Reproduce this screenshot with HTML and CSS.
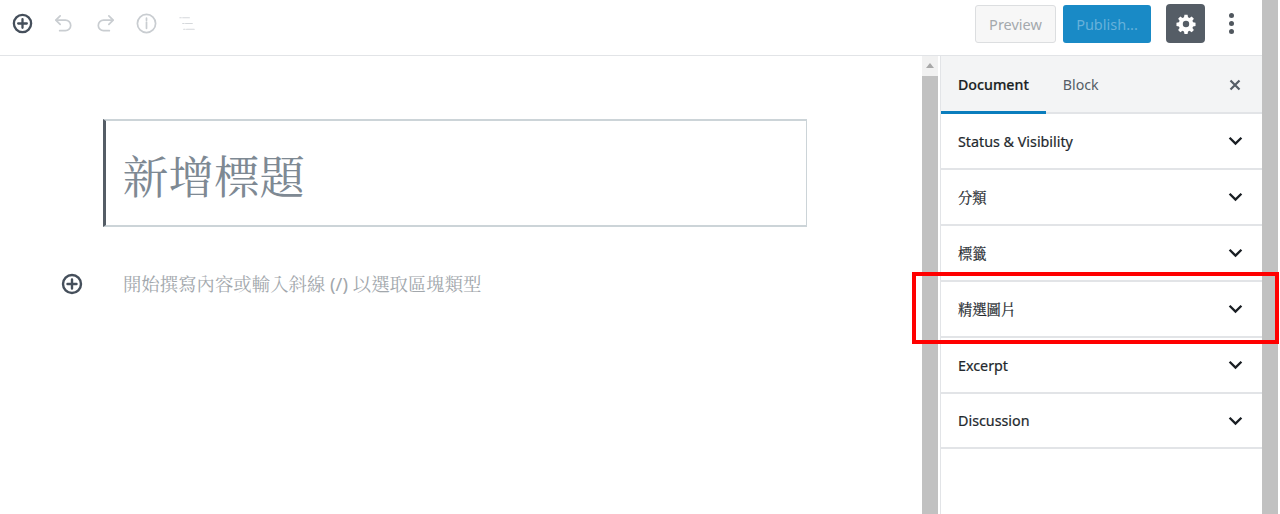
FILE: index.html
```html
<!DOCTYPE html>
<html lang="zh-Hant">
<head>
    <meta charset="UTF-8">
    <title>新增文章</title>
    <link rel="stylesheet" href="styles.css">
</head>
<body>
    <div class="app">
        <div class="top-bar">
            <div class="tools">
                <svg class="tool-icon dark" viewBox="0 0 24 24"><circle cx="12" cy="12" r="9" class="ring"/><path d="M12 7.5v9M7.5 12h9" class="line"/></svg>
                <svg class="tool-icon" viewBox="0 0 24 24"><path d="M8.5 4 4 8.5 8.5 13" class="line thin"/><path d="M4.5 8.5H14a5.5 5.5 0 0 1 0 11H8" class="line thin"/></svg>
                <svg class="tool-icon" viewBox="0 0 24 24"><path d="M15.5 4 20 8.500 15.500 13" class="line thin"/><path d="M19.500 8.500H10a5.500 5.500 0 0 0 0 11h6" class="line thin"/></svg>
                <svg class="tool-icon" viewBox="0 0 24 24"><circle cx="12" cy="12" r="9.500" class="ring thin"/><path d="M12 10.500v6.500M12 6.500v2" class="line thin"/></svg>
                <svg class="tool-icon" viewBox="0 0 24 24"><path d="M4 6h1.500M7 6h7M7 12h1.500M10 12h7M8 18h1.500M11 18h8" class="line hair"/></svg>
            </div>
            <div class="actions">
                <button class="btn-preview">Preview</button>
                <button class="btn-publish">Publish...</button>
                <div class="btn-settings">
                    <svg viewBox="0 0 24 24" width="22" height="22"><path d="M10.300 2h3.400l.5 2.700 1.700.7 2.300-1.600 2.400 2.400-1.600 2.300.7 1.700 2.700.5v3.400l-2.700.5-.7 1.700 1.600 2.300-2.400 2.400-2.300-1.600-1.700.7-.5 2.700h-3.400l-.5-2.700-1.700-.7-2.300 1.600-2.400-2.400 1.600-2.300-.7-1.700-2.700-.5v-3.400l2.700-.5.7-1.700-1.600-2.300 2.400-2.400 2.300 1.600 1.700-.7zM12 8.500a3.500 3.500 0 1 0 0 7 3.500 3.500 0 0 0 0-7z" fill="#fff" fill-rule="evenodd"/></svg>
                </div>
                <div class="more-dots"><span></span><span></span><span></span></div>
            </div>
            <div class="top-gutter"></div>
        </div>
        <div class="main">
            <div class="editor">
                <div class="title-box">新增標題</div>
                <div class="para-row">
                    <svg class="para-add" viewBox="0 0 24 24"><circle cx="12" cy="12" r="9" class="ring"/><path d="M12 7.500v9M7.500 12h9" class="line"/></svg>
                    <div class="placeholder">開始撰寫內容或輸入斜線 (/) 以選取區塊類型</div>
                </div>
            </div>
            <div class="scrollbar editor-scroll"><div class="scroll-up"></div><div class="scroll-thumb"></div></div>
            <div class="sidebar">
                <div class="tabs">
                    <div class="tab active">Document</div>
                    <div class="tab">Block</div>
                    <svg class="close-icon" viewBox="0 0 12 12"><path d="M1.500 1.500l9 9M10.500 1.500l-9 9"/></svg>
                </div>
                <div class="panel"><span>Status &amp; Visibility</span><svg class="chevron" viewBox="0 0 14 9"><path d="M1.500 1.500 7 7l5.500-5.500"/></svg></div>
                <div class="panel"><span>分類</span><svg class="chevron" viewBox="0 0 14 9"><path d="M1.500 1.500 7 7l5.500-5.500"/></svg></div>
                <div class="panel"><span>標籤</span><svg class="chevron" viewBox="0 0 14 9"><path d="M1.500 1.500 7 7l5.500-5.500"/></svg></div>
                <div class="panel"><span>精選圖片</span><svg class="chevron" viewBox="0 0 14 9"><path d="M1.500 1.500 7 7l5.500-5.500"/></svg></div>
                <div class="panel"><span>Excerpt</span><svg class="chevron" viewBox="0 0 14 9"><path d="M1.500 1.500 7 7l5.500-5.500"/></svg></div>
                <div class="panel"><span>Discussion</span><svg class="chevron" viewBox="0 0 14 9"><path d="M1.500 1.500 7 7l5.500-5.500"/></svg></div>
            </div>
            <div class="scrollbar page-scroll"></div>
        </div>
        <div class="highlight"></div>
    </div>
</body>
</html>
```

FILE: styles.css
```css
body {
    margin: 0;
    background: #fff;
    font-family: "Noto Sans", "Noto Serif CJK TC", "Noto Sans CJK TC", sans-serif;
    overflow: hidden;
}
.app {
    position: relative;
    width: 1280px;
    height: 514px;
    display: flex;
    flex-direction: column;
    overflow: hidden;
}

/* top bar */
.top-bar {
    display: flex;
    align-items: center;
    height: 55px;
    border-bottom: 1px solid #e2e4e7;
    box-sizing: content-box;
    flex-shrink: 0;
}
.tools {
    display: flex;
    align-items: center;
    gap: 18.300px;
    padding-left: 11px;
    flex: 1;
    margin-top: -8px;
}
.tool-icon {
    width: 23px;
    height: 23px;
}
.ring, .line {
    fill: none;
    stroke: #c9cdd1;
    stroke-width: 2;
    stroke-linecap: round;
    stroke-linejoin: round;
}
.thin { stroke-width: 1.8; }
.hair { stroke-width: 1.200; stroke: #d5d8db; }
.dark .ring, .dark .line, .para-add .ring, .para-add .line {
    stroke: #454f5b;
    stroke-width: 2.400;
}
.actions {
    display: flex;
    align-items: center;
    margin-top: -8px;
}
.actions button {
    height: 38px;
    box-sizing: border-box;
    border-radius: 3px;
    font-family: inherit;
    font-size: 14.500px;
    padding: 0;
}
.btn-preview {
    width: 81px;
    background: #f7f7f7;
    border: 1px solid #dcdee0;
    color: #a4a9ad;
}
.btn-publish {
    width: 88px;
    margin-left: 7px;
    background: #198ac6;
    border: none;
    color: #66b1da;
}
.btn-settings {
    width: 39px;
    height: 39px;
    margin-left: 15px;
    border-radius: 4px;
    background: #555d66;
    display: flex;
    align-items: center;
    justify-content: center;
}
.more-dots {
    width: 14px;
    margin-left: 19px;
    margin-right: 24px;
    display: flex;
    flex-direction: column;
    align-items: center;
    gap: 3px;
}
.more-dots span {
    width: 5px;
    height: 5px;
    border-radius: 50%;
    background: #50575e;
}
.top-gutter {
    width: 18px;
    height: 56px;
    background: #c1c1c1;
    margin-bottom: -1px;
    border-right: 2px solid #fff;
    box-sizing: border-box;
}

/* main */
.main {
    flex: 1;
    display: flex;
    min-height: 0;
}
.editor {
    width: 922px;
    flex-shrink: 0;
    padding-top: 63px;
    box-sizing: border-box;
}
.title-box {
    margin-left: 103px;
    width: 704px;
    height: 108px;
    box-sizing: border-box;
    border: 1px solid #ccd4d8;
    border-width: 2px 1px 2px 3px;
    border-left-color: #555d66;
    padding-left: 17px;
    font-family: "Noto Serif CJK TC", "Liberation Serif", "Noto Sans CJK TC", serif;
    font-size: 45.500px;
    line-height: 108px;
    color: #7e8993;
}
.para-row {
    display: flex;
    align-items: center;
    margin-top: 44px;
    padding-left: 60px;
}
.para-add {
    width: 24px;
    height: 24px;
}
.placeholder {
    margin-left: 39px;
    font-size: 18.400px;
    line-height: 26px;
    color: #a2a7ac;
}
.scrollbar {
    background: #c1c1c1;
    flex-shrink: 0;
}
.editor-scroll {
    width: 18px;
    display: flex;
    flex-direction: column;
    background: #f1f1f1;
    border-right: 2px solid #fff;
    box-sizing: border-box;
}
.scroll-up {
    height: 20px;
    position: relative;
    background: #f1f1f1;
}
.scroll-up::after {
    content: "";
    position: absolute;
    left: 4px;
    top: 7px;
    border: 4px solid transparent;
    border-top: none;
    border-bottom: 5px solid #a8a8a8;
}
.scroll-thumb {
    flex: 1;
    background: #c1c1c1;
}
.page-scroll {
    width: 16px;
    margin-right: 2px;
}

/* sidebar */
.sidebar {
    flex: 1;
    min-width: 0;
    border-left: 1px solid #e2e4e7;
}
.tabs {
    display: flex;
    align-items: stretch;
    height: 58px;
    box-sizing: border-box;
    background: #f3f4f5;
    border-bottom: 2px solid #e2e4e7;
    position: relative;
}
.tab {
    display: flex;
    align-items: center;
    padding: 2px 17px 0;
    font-size: 14.200px;
    color: #555d66;
    margin-bottom: -2px;
    border-bottom: 3px solid transparent;
}
.tab.active {
    color: #191e23;
    font-weight: 500;
    border-bottom-color: #0a7dbd;
    -webkit-text-stroke: 0.200px #191e23;
}
.close-icon {
    position: absolute;
    right: 21px;
    top: 23px;
    width: 12px;
    height: 12px;
    fill: none;
    stroke: #555d66;
    stroke-width: 2.200;
}
.panel {
    height: 56px;
    box-sizing: border-box;
    border-bottom: 2px solid #e2e4e7;
    display: flex;
    align-items: center;
    justify-content: space-between;
    padding: 0 19px 0 17px;
    font-size: 14.300px;
    color: #23282d;
    -webkit-text-stroke: 0.200px #23282d;
}
.panel:last-child {
    height: 55px;
}
.chevron {
    width: 15px;
    height: 10px;
    fill: none;
    stroke: #191e23;
    stroke-width: 2.200;
}

/* red annotation box */
.highlight {
    position: absolute;
    left: 912px;
    top: 272px;
    width: 367px;
    height: 72px;
    box-sizing: border-box;
    border: 4px solid #f00;
}
```
